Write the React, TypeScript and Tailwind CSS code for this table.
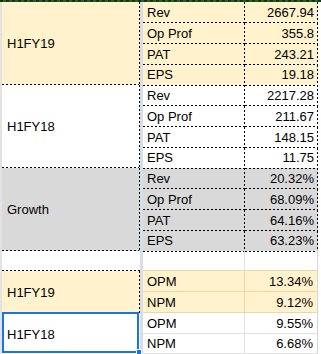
import React from "react";

const HD = () => (
  <div className="h-px shrink-0 [background-image:repeating-linear-gradient(90deg,#000_0_2px,transparent_2px_4px)]" />
);
const VD = () => (
  <div className="w-px shrink-0 self-stretch [background-image:repeating-linear-gradient(180deg,#000_0_2px,transparent_2px_4px)]" />
);

const Edge = () => <div className="w-[2px] shrink-0 self-stretch bg-[#e3e3e3]" />;
const Strip = () => <div className="w-[3px] shrink-0 self-stretch bg-[#d9dee6]" />;
const Right = () => <div className="w-[3px] shrink-0 self-stretch bg-white" />;

function DRow({ label, value, h }: { label: string; value: string; h: string }) {
  return (
    <div className={`flex ${h}`}>
      <div className="w-[101px] flex flex-col">
        <div className="flex-1 flex items-end pl-[4px]">{label}</div>
        <HD />
      </div>
      <VD />
      <div className="w-[72px] flex flex-col">
        <div className="flex-1 flex items-end justify-end pr-[3px]">{value}</div>
        <HD />
      </div>
      <VD />
    </div>
  );
}

function Block({
  name,
  bg,
  rows,
}: {
  name: string;
  bg: string;
  rows: [string, string][];
}) {
  const hs = ["h-[21px]", "h-[21px]", "h-[21px]", "h-[20px]"];
  return (
    <div className={`flex h-[83px] ${bg}`}>
      <Edge />
      <div className="w-[138px] flex">
        <div className="w-[137px] flex flex-col">
          <div className="flex-1 flex items-center pl-[5px] pt-[2px]">{name}</div>
          <HD />
        </div>
        <VD />
      </div>
      <Strip />
      <div className="w-[175px] flex flex-col">
        {rows.map((r, i) => (
          <DRow key={i} label={r[0]} value={r[1]} h={hs[i]} />
        ))}
      </div>
      <Right />
    </div>
  );
}

function SRow({
  label,
  value,
  beige,
  h,
}: {
  label: string;
  value: string;
  beige: boolean;
  h: string;
}) {
  return (
    <div className={`flex ${h} ${beige ? "bg-[#fff2cc]" : "bg-white"}`}>
      <div
        className={`w-[102px] flex items-end pl-[4px] border-r border-b ${
          beige ? "border-[#e8d8aa]" : "border-[#e2e2e2]"
        }`}
      >
        {label}
      </div>
      <div
        className={`w-[73px] flex items-end justify-end pr-[4px] border-r border-b border-r-[#d6d6d6] ${
          beige ? "border-b-[#e8d8aa]" : "border-b-[#e2e2e2]"
        }`}
      >
        {value}
      </div>
    </div>
  );
}

export default function App() {
  return (
    <div className="w-[321px] h-[354px] overflow-hidden bg-white text-black text-[13px] font-['Liberation_Sans',Arial,sans-serif] leading-normal">
      <div className="h-[2px] [background-image:repeating-linear-gradient(90deg,#0f3a0f_0_3px,#2c5a2c_3px_6px)]" />
      <Block
        name="H1FY19"
        bg="bg-[#fff2cc]"
        rows={[
          ["Rev", "2667.94"],
          ["Op Prof", "355.8"],
          ["PAT", "243.21"],
          ["EPS", "19.18"],
        ]}
      />
      <Block
        name="H1FY18"
        bg="bg-white"
        rows={[
          ["Rev", "2217.28"],
          ["Op Prof", "211.67"],
          ["PAT", "148.15"],
          ["EPS", "11.75"],
        ]}
      />
      <Block
        name="Growth"
        bg="bg-[#d9d9d9]"
        rows={[
          ["Rev", "20.32%"],
          ["Op Prof", "68.09%"],
          ["PAT", "64.16%"],
          ["EPS", "63.23%"],
        ]}
      />
      {/* empty row */}
      <div className="flex h-[20px] bg-white">
        <Edge />
        <div className="w-[138px] flex flex-col">
          <div className="flex-1" />
          <HD />
        </div>
        <Strip />
        <div className="w-[175px] flex">
          <div className="w-[102px] border-r border-b border-r-[#e2e2e2] border-b-[#e8d8aa]" />
          <div className="w-[73px] border-r border-b border-r-[#d6d6d6] border-b-[#e8d8aa]" />
        </div>
        <Right />
      </div>
      {/* margin section */}
      <div className="flex h-[83px] bg-white">
        <Edge />
        <div className="w-[138px] flex flex-col relative">
          <div className="h-[42px] flex bg-[#fff2cc]">
            <div className="w-[137px] flex items-center pl-[5px] pt-[2px]">H1FY19</div>
            <VD />
          </div>
          <div className="h-[41px] flex items-center pl-[5px] pt-[2px]">H1FY18</div>
          <div className="absolute left-0 top-[41px] w-[137px] h-[41px] border-2 border-[#1a73e8]" />
          <div className="absolute left-[134px] top-[78px] w-[6px] h-[6px] bg-[#1a73e8] border border-white" />
        </div>
        <Strip />
        <div className="w-[175px] flex flex-col">
          <SRow label="OPM" value="13.34%" beige h="h-[21px]" />
          <SRow label="NPM" value="9.12%" beige h="h-[21px]" />
          <SRow label="OPM" value="9.55%" beige={false} h="h-[21px]" />
          <SRow label="NPM" value="6.68%" beige={false} h="h-[20px]" />
        </div>
        <Right />
      </div>
    </div>
  );
}
